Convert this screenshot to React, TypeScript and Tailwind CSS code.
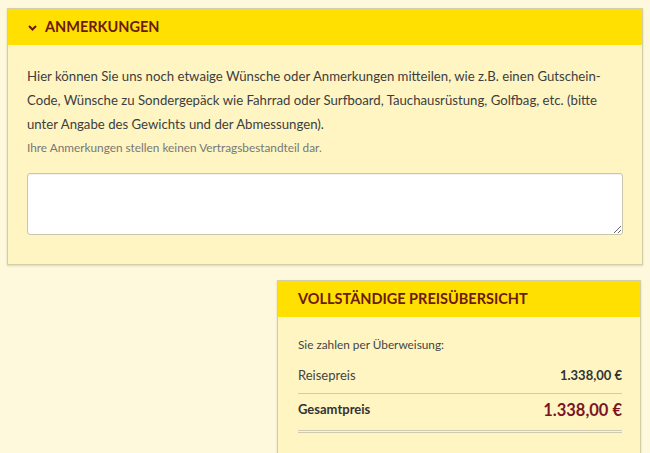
function Card({ title, icon, children, className }: { title: string; icon?: boolean; children: React.ReactNode; className?: string }) {
  return (
    <div className={`border border-[#d5cfa6] bg-[#fff5c2] shadow-[0_1px_2px_rgba(0,0,0,0.15)] ${className ?? ""}`}>
      <div className="flex h-[36px] items-center gap-[8px] bg-[#ffe000] px-[20px]">
        {icon && (
          <svg width="9" height="6" viewBox="0 0 9 6" className="mt-[1px] text-[#6b1a0c]">
            <polyline points="1,1 4.5,4.5 8,1" fill="none" stroke="currentColor" strokeWidth="2" />
          </svg>
        )}
        <h2 className="text-[14.5px] font-bold uppercase text-[#6b1a0c]">{title}</h2>
      </div>
      {children}
    </div>
  );
}

export default function App() {
  return (
    <div className="min-h-[453px] bg-[#fef9dc] px-[7px] pt-[8px] font-['Lato',sans-serif] text-[#3d3d3d]">
      <Card title="Anmerkungen" icon>
        <div className="px-[19px] pb-[29px] pt-[19px]">
          <p className="text-[13.2px] leading-[24px]">
            Hier können Sie uns noch etwaige Wünsche oder Anmerkungen mitteilen, wie z.B. einen Gutschein-Code, Wünsche zu
            Sondergepäck wie Fahrrad oder Surfboard, Tauchausrüstung, Golfbag, etc. (bitte unter Angabe des Gewichts und der
            Abmessungen).
          </p>
          <p className="mt-[4px] text-[11.8px] leading-[16px] text-[#777]">Ihre Anmerkungen stellen keinen Vertragsbestandteil dar.</p>
          <textarea className="mt-[17px] block h-[62px] w-full resize-y rounded-[3px] border border-[#c9c6b0] bg-white shadow-[inset_0_1px_1px_rgba(0,0,0,0.06)] outline-none" />
        </div>
      </Card>

      <div className="mt-[15px] flex justify-end pr-[2px]">
        <Card title="Vollständige Preisübersicht" className="w-[364px]">
          <div className="pb-[20px] pl-[20px] pr-[18px] pt-[20px]">
            <p className="text-[11.8px] leading-[16px] text-[#444]">Sie zahlen per Überweisung:</p>
            <div className="mt-[13px] flex items-center justify-between border-b border-[#cfcab0] pb-[7px]">
              <span className="text-[13px] text-[#444]">Reisepreis</span>
              <span className="text-[13px] font-bold text-[#333]">1.338,00 €</span>
            </div>
            <div className="flex items-center justify-between border-b-[3px] border-double border-[#cfcab0] pb-[8px] pt-[4px]">
              <span className="text-[13px] font-bold text-[#333]">Gesamtpreis</span>
              <span className="text-[16.5px] font-bold text-[#7a1424]">1.338,00 €</span>
            </div>
          </div>
        </Card>
      </div>
    </div>
  );
}
